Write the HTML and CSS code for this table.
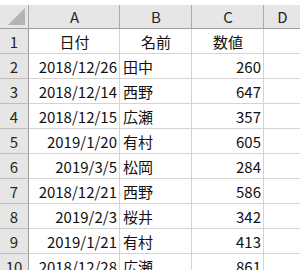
FILE: index.html
```html
<!DOCTYPE html>
<html lang="ja">
<head>
<meta charset="utf-8">
<link rel="stylesheet" href="styles.css">
</head>
<body>
<div class="sheet">
  <div class="row hdr">
    <div class="c rh corner"><span class="tri"></span></div>
    <div class="c a ch">A</div>
    <div class="c b ch">B</div>
    <div class="c cc ch">C</div>
    <div class="c d ch">D</div>
  </div>
  <div class="row"><div class="c rh">1</div><div class="c a ctr">日付</div><div class="c b ctr">名前</div><div class="c cc ctr">数値</div><div class="c d"></div></div>
  <div class="row"><div class="c rh">2</div><div class="c a r">2018/12/26</div><div class="c b">田中</div><div class="c cc r">260</div><div class="c d"></div></div>
  <div class="row"><div class="c rh">3</div><div class="c a r">2018/12/14</div><div class="c b">西野</div><div class="c cc r">647</div><div class="c d"></div></div>
  <div class="row"><div class="c rh">4</div><div class="c a r">2018/12/15</div><div class="c b">広瀬</div><div class="c cc r">357</div><div class="c d"></div></div>
  <div class="row"><div class="c rh">5</div><div class="c a r">2019/1/20</div><div class="c b">有村</div><div class="c cc r">605</div><div class="c d"></div></div>
  <div class="row"><div class="c rh">6</div><div class="c a r">2019/3/5</div><div class="c b">松岡</div><div class="c cc r">284</div><div class="c d"></div></div>
  <div class="row"><div class="c rh">7</div><div class="c a r">2018/12/21</div><div class="c b">西野</div><div class="c cc r">586</div><div class="c d"></div></div>
  <div class="row"><div class="c rh">8</div><div class="c a r">2019/2/3</div><div class="c b">桜井</div><div class="c cc r">342</div><div class="c d"></div></div>
  <div class="row"><div class="c rh">9</div><div class="c a r">2019/1/21</div><div class="c b">有村</div><div class="c cc r">413</div><div class="c d"></div></div>
  <div class="row"><div class="c rh">10</div><div class="c a r">2018/12/28</div><div class="c b">広瀬</div><div class="c cc r">861</div><div class="c d"></div></div>
</div>
</body>
</html>
```
FILE: styles.css
```css
html, body {
  margin: 0;
  padding: 0;
  background: #ffffff;
  overflow: hidden;
}
.sheet {
  padding-top: 5px;
  font-family: "Noto Sans CJK JP", "Noto Sans", sans-serif;
  font-size: 15px;
  color: #111;
}
.row {
  display: flex;
  height: 25px;
}
.row.hdr {
  height: 24px;
}
.c {
  box-sizing: border-box;
  height: 100%;
  border-right: 1px solid #d4d4d4;
  border-bottom: 1px solid #d4d4d4;
  display: flex;
  align-items: center;
  padding: 0 2px 0 3px;
  white-space: nowrap;
  overflow: hidden;
  line-height: 1;
  flex: none;
}
.rh {
  width: 29px;
  background: #e6e6e6;
  border-right-color: #9f9f9f;
  border-bottom-color: #bdbdbd;
  justify-content: center;
  color: #262626;
  padding: 0;
}
.a { width: 91px; }
.b { width: 72px; }
.cc { width: 72px; }
.d { flex: 1 1 auto; border-right: none; }
.r { justify-content: flex-end; }
.ctr { justify-content: center; }
.hdr .c {
  background: #e6e6e6;
  border-bottom-color: #9f9f9f;
  border-right-color: #ababab;
}
.ch {
  justify-content: center;
  color: #262626;
}
.corner {
  position: relative;
}
.tri {
  position: absolute;
  right: 3px;
  bottom: 3px;
  width: 0;
  height: 0;
  border-left: 17px solid transparent;
  border-bottom: 17px solid #b4b4b4;
}
```
